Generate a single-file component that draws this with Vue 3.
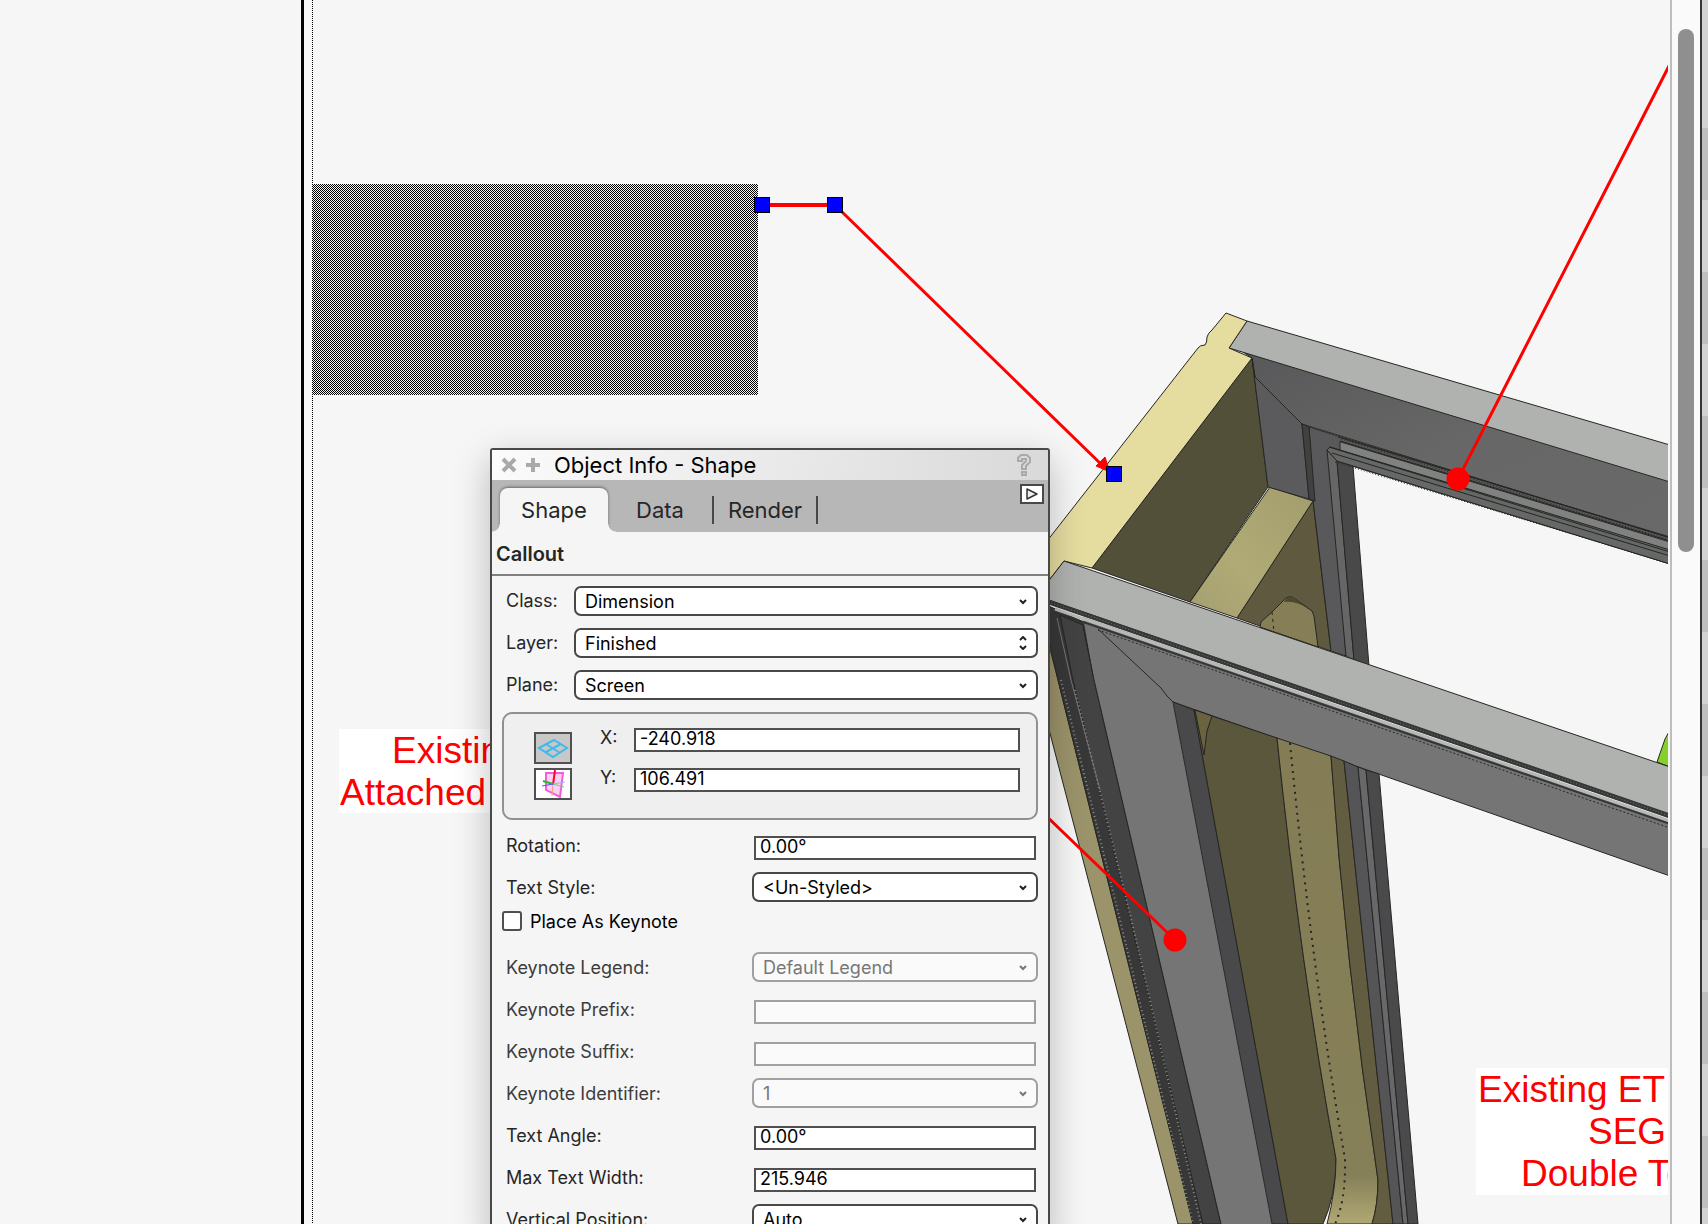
<script setup>
import { reactive, ref } from 'vue'

const tabs = ['Shape', 'Data', 'Render']
const activeTab = ref('Shape')

const placement = reactive([
  { id: 'class', label: 'Class:', value: 'Dimension', arrow: 'down' },
  { id: 'layer', label: 'Layer:', value: 'Finished', arrow: 'both' },
  { id: 'plane', label: 'Plane:', value: 'Screen', arrow: 'down' }
])

const position = reactive([
  { id: 'pos-x', label: 'X:', value: '-240.918' },
  { id: 'pos-y', label: 'Y:', value: '106.491' }
])

const textFields = reactive([
  { id: 'rotation', label: 'Rotation:', kind: 'input', value: '0.00°' },
  { id: 'text-style', label: 'Text Style:', kind: 'select', value: '<Un-Styled>' }
])

const keynote = ref(false)

const keynoteFields = reactive([
  { id: 'legend', label: 'Keynote Legend:', kind: 'select', value: 'Default Legend', disabled: true },
  { id: 'prefix', label: 'Keynote Prefix:', kind: 'input', value: '', disabled: true },
  { id: 'suffix', label: 'Keynote Suffix:', kind: 'input', value: '', disabled: true },
  { id: 'identifier', label: 'Keynote Identifier:', kind: 'select', value: '1', disabled: true },
  { id: 'angle', label: 'Text Angle:', kind: 'input', value: '0.00°' },
  { id: 'max-width', label: 'Max Text Width:', kind: 'input', value: '215.946' },
  { id: 'vertical', label: 'Vertical Position:', kind: 'select', value: 'Auto' }
])

const handles = [[754, 197], [827, 197], [1106, 466]]
</script>

<template>
  <div class="app">
    <main class="viewport">
      <svg class="drawing" aria-label="Drawing">
        <defs>
          <pattern id="hatch" width="2" height="2" patternUnits="userSpaceOnUse">
            <rect width="2" height="2" fill="#f6f6f6" />
            <rect width="1" height="1" /><rect x="1" y="1" width="1" height="1" />
          </pattern>
          <linearGradient id="face" x1="0" y1="0" x2="1" y2="1">
            <stop offset="0" stop-color="#58585a" /><stop offset=".5" stop-color="#676767" /><stop offset="1" stop-color="#696969" />
          </linearGradient>
          <linearGradient id="batten" x1="1" y1="0" x2="0" y2="1">
            <stop offset="0" stop-color="#a39d6d" /><stop offset=".6" stop-color="#b0aa76" /><stop offset="1" stop-color="#a49f70" />
          </linearGradient>
          <linearGradient id="groove" x1="0" y1="0" x2="0" y2="1">
            <stop offset="0" stop-color="#837c55" /><stop offset=".9" stop-color="#868059" /><stop offset="1" stop-color="#b0a873" />
          </linearGradient>
        </defs>

        <rect x="301" width="3" height="100%" shape-rendering="crispEdges" />
        <rect x="312" width="1" height="100%" fill="url(#hatch)" shape-rendering="crispEdges" />
        <rect x="312" y="184" width="446" height="211" fill="url(#hatch)" shape-rendering="crispEdges" />

        <!-- timber section, rear half -->
        <g class="edge">
          <path fill="#53503a" d="M1252 358L1268 487L1190 602L1092 568Z" />
          <path fill="#5f5a3f" d="M1313 501L1331 651L1237 618Z" />
          <path fill="url(#batten)" d="M1270 487L1313 501L1237 618L1190 602Z" />
          <path fill="#857e57" d="M1260 627L1261 622L1273 611L1286 598Q1290 595 1294 598L1312 611L1314 616L1318 647Z" />
          <path fill="#4d492f" stroke="none" d="M1286 599Q1290 595 1294 598L1310 610Q1296 600 1284 602Z" />
          <path fill="none" stroke-dasharray="3 4" d="M1272 612L1274 633" />
          <path fill="url(#face)" d="M1240 350L1670 480V538L1302 424L1255 377L1252 358Z" />
          <path fill="#5b5b5d" d="M1252 358L1255 377L1302 424L1309 499L1268 487Z" />
          <path fill="#59595b" d="M1309 427L1338 436L1670 538V564L1352 466L1331 451L1346 656L1331 651L1313 500Z" />
          <path fill="#414141" d="M1302 424L1309 427L1315 501L1309 499Z" />
          <path fill="#666" d="M1327 450L1337 461L1354 660L1346 656Z" />
          <path fill="#494949" d="M1337 461L1353 466L1369 666L1354 660Z" />
          <path fill="#666867" d="M1327 450L1330 447L1670 548V564L1353 466L1337 461Z" />
          <path fill="#7f8280" d="M1340 441L1670 541V550L1340 450Z" />
          <path fill="none" d="M1338 437L1670 537M1341 442L1670 542M1329 447L1670 552M1332 453L1670 556" />
          <path fill="none" stroke-dasharray="1 2" d="M1341 439L1670 540M1335 462L1670 564" />
          <path fill="#b0b2af" d="M1247 321L1670 445V482L1229 348Z" />
          <path fill="#e5dca0" d="M1226 313L1247 321L1229 348L1252 358L1092 568L1064 561L1040 592V550L1198 348Q1200 345 1205 345Q1207 343 1207 337Q1208 333 1212 330Z" />
        </g>

        <!-- front frame and cavity -->
        <g class="edge">
          <path fill="#9b936a" d="M1040 610L1058 680L1193 1224H1178L1040 695Z" />
          <path fill="#383838" d="M1040 602L1090 625L1096 680L1221 1224H1193L1058 680Z" />
          <path fill="#434343" d="M1060 615L1083 625L1094 680L1221 1224H1203L1073 680Z" />
          <path fill="none" stroke="#8c8c8c" stroke-width="2" stroke-dasharray="1 3" d="M1061 680L1120 920L1193 1224M1075 690L1135 935L1201 1224" />
          <path fill="none" stroke="#777" d="M1057 618L1071 680L1100 790" />
          <path fill="#757575" stroke="none" d="M1083 617L1670 820V876L1173 702L1272 1224H1221L1094 680Z" />
          <path fill="none" d="M1083 625L1094 680L1221 1224M1173 702L1670 876" />
          <path fill="none" d="M1098 629L1161 688Q1167 697 1173 702" />
          <path fill="#49494b" d="M1173 702L1194 710L1288 1224H1272Z" />
          <path fill="#5b573d" d="M1194 710L1277 738Q1301 970 1336 1159Q1336 1195 1323 1224H1288Z" />
          <path fill="#69633f" d="M1195 710L1212 716L1207 731L1204 755Z" />
          <path fill="url(#groove)" d="M1277 738L1331 756Q1345 960 1378 1180Q1378 1205 1372 1224H1327Q1336 1190 1336 1159Q1301 970 1277 738Z" />
          <path fill="none" stroke-width="2" stroke-dasharray="2 5" d="M1290 743Q1312 970 1345 1159Q1346 1200 1335 1224" />
          <path fill="#625c40" d="M1331 756L1344 761L1393 1224H1372Q1378 1205 1378 1180Q1345 960 1331 756Z" />
          <path fill="#555557" d="M1344 761L1358 767L1403 1224H1393Z" />
          <path fill="#68686a" d="M1358 767L1366 770L1408 1224H1403Z" />
          <path fill="#4a4a4c" d="M1366 770L1379 774L1418 1224H1408Z" />
          <path fill="#86d02b" d="M1670 730L1665 739L1657 762L1670 767Z" />
          <path fill="#b0b2af" d="M1064 561L1670 767V815L1040 597V592Z" />
          <path fill="none" stroke="#363837" stroke-width="5" d="M1040 599L1670 816" />
          <path fill="none" stroke="#737573" stroke-width="1" stroke-dasharray="1 2" d="M1040 599L1670 816" />
          <path fill="none" stroke="#b7b9b6" stroke-width="3" d="M1055 609L1670 821" />
          <path fill="none" stroke="#343434" stroke-width="2" d="M1054 612L1670 824" />
          <path fill="none" stroke-dasharray="2 2" d="M1098 630L1670 828" />
        </g>

        <!-- drawing notes -->
        <rect x="339" y="729" width="170" height="84" fill="#fff" />
        <rect x="1476" y="1068" width="200" height="127" fill="#fff" />
        <g class="note">
          <text x="392" y="763">Existing</text>
          <text x="340" y="805">Attached</text>
          <text x="1478" y="1102">Existing ET</text>
          <text x="1588" y="1144">SEG</text>
          <text x="1521" y="1186">Double To</text>
        </g>

        <!-- leader lines -->
        <g stroke="#f00" stroke-width="3" fill="#f00">
          <path stroke-width="4" d="M762 205H835" />
          <path d="M840 210L1104 467M1670 64L1458 479M1040 810L1175 940" />
          <path stroke-width="1" d="M1110 472L1096 466L1105 457Z" />
          <circle cx="1458" cy="479" r="10" /><circle cx="1175" cy="940" r="10" />
        </g>
      </svg>
      <svg class="drawing handles" aria-hidden="true">
        <rect v-for="[x, y] in handles" :key="x" :x="x + 0.5" :y="y + 0.5" width="15" height="15" fill="#00f" stroke="#000" />
      </svg>

      <section class="palette" aria-label="Object Info">
        <header class="titlebar">
          <button type="button" aria-label="Close">
            <svg width="16" height="16" viewBox="0 0 16 16"><path d="M2 2L14 14M14 2L2 14" stroke="#a9a9a9" stroke-width="4" /></svg>
          </button>
          <button type="button" aria-label="Expand">
            <svg width="16" height="16" viewBox="0 0 16 16"><path d="M8 1V15M1 8H15" stroke="#a9a9a9" stroke-width="4" /></svg>
          </button>
          <h1>Object Info - Shape</h1>
          <button type="button" class="help" aria-label="Help">
            <svg width="16" height="24" viewBox="0 0 16 24" fill="none" stroke="#a9a9a9" stroke-width="2"><path d="M2 8V5L5 2H11L14 5V9L10 13V16H6V12L10 8V6H6V8ZM6 19H10V22H6Z" /></svg>
          </button>
        </header>

        <nav class="tabs">
          <button v-for="tab in tabs" :key="tab" type="button" :class="['tab', { active: tab === activeTab }]" @click="activeTab = tab">{{ tab }}</button>
          <button type="button" class="menu" aria-label="Menu">
            <svg width="14" height="14" viewBox="0 0 14 14"><path d="M2 2L12 7L2 12Z" fill="#eee" stroke="#333" stroke-width="1.5" stroke-linejoin="round" /></svg>
          </button>
        </nav>

        <h2>Callout</h2>

        <form class="form" @submit.prevent>
          <div v-for="f in placement" :key="f.id" class="row">
            <label :for="f.id" class="short">{{ f.label }}</label>
            <div class="select">
              <select :id="f.id" v-model="f.value"><option>{{ f.value }}</option></select>
              <svg width="8" height="14" viewBox="0 0 8 14"><path :d="f.arrow === 'both' ? 'M1 4L4 1L7 4M1 10L4 13L7 10' : 'M1 6L4 9L7 6'" /></svg>
            </div>
          </div>

          <div class="position">
            <div class="modes">
              <button type="button" class="pressed" aria-label="Layer plane">
                <svg width="32" height="24" viewBox="0 0 32 24" fill="none" stroke="#3dbcec" stroke-width="2"><path d="M2 12L17 4L30 12L16 21ZM9 8L23 17M24 8L9 16" /></svg>
              </button>
              <button type="button" aria-label="Screen plane">
                <svg width="28" height="28" viewBox="0 0 28 28" fill="none"><path d="M7 3H24L21 27L7 20Z" fill="#f8d2f0" stroke="#f35fd8" stroke-width="2" /><path d="M16 0L14 15" stroke="#f03" stroke-width="2" /><path d="M14 14L13 26" stroke="#f99" /><path d="M4 11L14 14" stroke="#2b2" stroke-width="2" /><path d="M14 14L25 17" stroke="#7c7" /><path d="M3 16L14 14" stroke="#55f" /><path d="M14 14L26 12" stroke="#aaf" /></svg>
              </button>
            </div>
            <div class="coords">
              <div v-for="f in position" :key="f.id" class="coord">
                <label :for="f.id">{{ f.label }}</label>
                <input :id="f.id" v-model="f.value" type="text">
              </div>
            </div>
          </div>

          <div v-for="f in textFields" :key="f.id" class="row">
            <label :for="f.id">{{ f.label }}</label>
            <input v-if="f.kind === 'input'" :id="f.id" v-model="f.value" type="text">
            <div v-else class="select">
              <select :id="f.id" v-model="f.value"><option>{{ f.value }}</option></select>
              <svg width="8" height="14" viewBox="0 0 8 14"><path d="M1 6L4 9L7 6" /></svg>
            </div>
          </div>

          <label class="check"><input v-model="keynote" type="checkbox">Place As Keynote</label>

          <div v-for="f in keynoteFields" :key="f.id" :class="['row', { disabled: f.disabled }]">
            <label :for="f.id">{{ f.label }}</label>
            <input v-if="f.kind === 'input'" :id="f.id" v-model="f.value" type="text" :disabled="f.disabled">
            <div v-else class="select">
              <select :id="f.id" v-model="f.value" :disabled="f.disabled"><option>{{ f.value }}</option></select>
              <svg width="8" height="14" viewBox="0 0 8 14"><path d="M1 6L4 9L7 6" /></svg>
            </div>
          </div>
        </form>
      </section>
    </main>

    <div class="scrollbar"><div class="thumb"></div></div>
    <aside class="dock"></aside>
  </div>
</template>

<style>
body { margin: 0; background: #f6f6f6; }
</style>

<style scoped>
.app { display: flex; height: 100vh; overflow: hidden; font-family: Inter, "Liberation Sans", sans-serif; font-size: 18px; color: #262626; }
.app * { box-sizing: border-box; }
.viewport { position: relative; flex: 1; min-width: 0; margin-right: 2px; overflow: hidden; background: #f6f6f6; }
.drawing { display: block; width: 100%; height: 100%; }
.handles { position: absolute; inset: 0; pointer-events: none; shape-rendering: crispEdges; }
.edge { stroke: #262622; stroke-width: 1; }
.note { font-family: "Liberation Sans", Arial, sans-serif; font-size: 37px; fill: #f00; }

.scrollbar { flex: none; width: 30px; padding: 29px 6px 0; border-left: 2px solid #bdbdbd; background: #fafafa; }
.thumb { width: 16px; height: 43.8%; border-radius: 8px; background: #8f8f8f; }
.dock { flex: none; width: 8px; border-left: 2px solid #363636; background: repeating-linear-gradient(#d2d2d2 0 72px, #bfbfbf 72px 144px) 0 56px; }

.palette { position: absolute; left: 490px; top: 448px; width: 560px; border: 2px solid #484848; border-radius: 3px; background: #f5f5f5; box-shadow: 0 12px 36px rgba(0, 0, 0, .25); }
button { padding: 0; border: 0; background: none; font: inherit; color: inherit; }
button svg { display: block; }
.titlebar { display: flex; align-items: center; gap: 8px; height: 30px; padding: 0 16px 0 9px; background: linear-gradient(100deg, #fbfbfb, #d9d9d9); }
h1 { flex: 1; margin: 0 0 0 5px; font-size: 22px; line-height: 28px; font-weight: 400; color: #000; }
.tabs { display: flex; align-items: flex-end; height: 52px; padding-left: 8px; background: #b7b7b7; }
.tab { position: relative; height: 28px; margin-bottom: 8px; padding: 0 14px; border-right: 2px solid #484848; font-size: 22px; line-height: 28px; }
.tab:nth-child(2) { padding: 0 28px; }
.tab.active { width: 108px; height: 44px; margin: 0; border: 0; border-radius: 8px 8px 0 0; background: #f5f5f5; box-shadow: 0 -1px 3px #666; clip-path: inset(-4px -10px 0 -10px); }
.tab.active::before, .tab.active::after { content: ""; position: absolute; bottom: 0; width: 8px; height: 8px; }
.tab.active::before { left: -8px; background: radial-gradient(circle at 0 0, transparent 7px, #f5f5f5 8px); }
.tab.active::after { right: -8px; background: radial-gradient(circle at 100% 0, transparent 7px, #f5f5f5 8px); }
.menu { display: grid; place-items: center; align-self: flex-start; width: 24px; height: 20px; margin: 4px 4px 0 auto; border: 2px solid #484848; background: #fff; }
h2 { margin: 0; padding: 10px 4px 8px; border-bottom: 2px solid #808080; font-size: 20px; line-height: 24px; font-weight: 600; }

.form { padding: 4px 10px 0; }
.row { display: flex; align-items: center; height: 42px; padding-left: 4px; }
.row > label { flex: 1; padding-top: 2px; line-height: 24px; }
.row > .short { flex: none; width: 68px; padding-top: 0; }
.row > .short + .select { flex: 1; }
.select { position: relative; width: 286px; height: 30px; }
.select select { display: block; width: 100%; height: 100%; margin: 0; padding: 0 24px 0 9px; appearance: none; border: 2px solid #484848; border-radius: 7px; background: #fff; font: inherit; color: #000; opacity: 1; }
.select svg { position: absolute; top: 8px; right: 11px; fill: none; stroke: #222; stroke-width: 2; pointer-events: none; }
input[type="text"] { width: 282px; height: 24px; margin: 0; padding: 0 4px 4px; border: 2px solid #505050; border-radius: 0; background: #fff; font: inherit; line-height: 18px; color: #000; }
.row > input[type="text"] { margin: 6px 2px 0 0; }
.disabled { color: #3c3c3c; }
.disabled .select select, .disabled > input[type="text"] { border-color: #a0a0a0; background: #fafafa; color: #777; }
.disabled .select svg { stroke: #777; }

.position { display: flex; height: 108px; margin: 6px 0 4px; padding: 14px 16px 0 30px; border: 2px solid #909090; border-radius: 10px; background: #efefef; }
.modes { display: flex; flex-direction: column; gap: 4px; padding-top: 4px; }
.modes button { display: grid; place-items: center; width: 38px; height: 32px; border: 2px solid #505050; background: #fff; overflow: hidden; }
.modes .pressed { background: #c8c8c8; }
.coords { display: flex; flex: 1; flex-direction: column; gap: 16px; padding-left: 28px; }
.coord { display: flex; height: 24px; }
.coord label { width: 34px; line-height: 20px; }
.coord input[type="text"] { flex: 1; }

.check { display: flex; align-items: center; gap: 8px; height: 26px; margin-bottom: 12px; color: #000; }
.check input { width: 20px; height: 20px; margin: 0; appearance: none; border: 2px solid #505050; border-radius: 3px; background: #fff; }
.check input:checked { background: #505050; }
</style>
